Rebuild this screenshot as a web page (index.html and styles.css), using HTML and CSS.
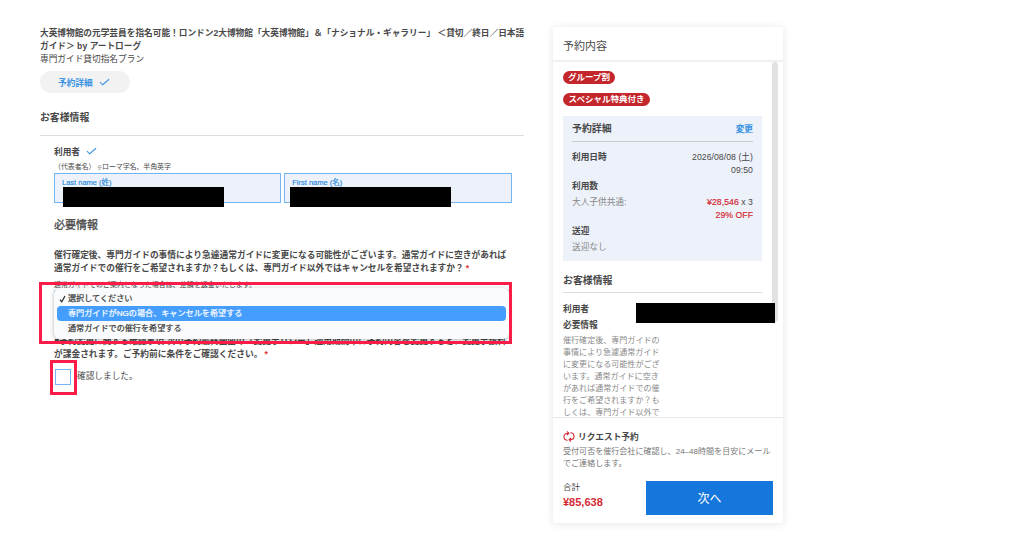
FILE: index.html
```html
<!DOCTYPE html>
<html>
<head>
<meta charset="utf-8">
<title>予約 - お客様情報</title>
<link rel="stylesheet" href="styles.css">
</head>
<body>
<div class="page">
  <main class="main">
    <h1 class="title">大英博物館の元学芸員を指名可能！ロンドン2大博物館「大英博物館」＆「ナショナル・ギャラリー」 ＜貸切／終日／日本語<br>ガイド＞ by アートローグ</h1>
    <p class="plan">専門ガイド貸切指名プラン</p>
    <div class="pill">予約詳細
      <svg class="check" viewBox="0 0 12 8"><path d="M1 4.2 4 7 11 1"/></svg>
    </div>
    <h2 class="section-title">お客様情報</h2>
    <form class="form">
      <div class="field-title">利用者
        <svg class="check" viewBox="0 0 12 8"><path d="M1 4.2 4 7 11 1"/></svg>
      </div>
      <p class="hint">（代表者名） <span class="kome">※</span>ローマ字名、半角英字</p>
      <div class="names">
        <div class="input"><label>Last name (姓)</label><span class="redacted"></span></div>
        <div class="input input-first"><label>First name (名)</label><span class="redacted"></span></div>
      </div>
      <h3 class="sub-title">必要情報</h3>
      <p class="question">催行確定後、専門ガイドの事情により急遽通常ガイドに変更になる可能性がございます。通常ガイドに空きがあれば<br>通常ガイドでの催行をご希望されますか？もしくは、専門ガイド以外ではキャンセルを希望されますか？<b class="req">*</b></p>
      <p class="note">通常ガイドでのご案内となった場合は、差額を返金いたします。</p>
      <div class="select">
        <div class="menu">
          <div class="option"><svg class="tick" viewBox="0 0 7 8"><path d="M1 4.6 2.7 6.8 6 1"/></svg>選択してください</div>
          <div class="option selected">専門ガイドがNGの場合、キャンセルを希望する</div>
          <div class="option">通常ガイドでの催行を希望する</div>
        </div>
        <div class="mark mark-menu"></div>
      </div>
      <p class="question policy">■予約変更に関する確認事項 次の予約最終画面の「変更ポリシー」適用期間中に予約内容を変更すると、変更手数料<br>が課金されます。ご予約前に条件をご確認ください。<b class="req">*</b></p>
      <div class="confirm"><span class="box"><span class="mark mark-box"></span></span><span>確認しました。</span></div>
    </form>
  </main>
  <aside class="card">
    <header class="card-head">予約内容</header>
    <div class="card-body">
      <div class="tag">グループ割</div>
      <div class="tag tag-wide">スペシャル特典付き</div>
      <section class="detail">
        <div class="detail-head"><span>予約詳細</span><a>変更</a></div>
        <div class="row"><b>利用日時</b><span class="value">2026/08/08 (土)<br>09:50</span></div>
        <div class="row"><b>利用数</b></div>
        <div class="row row-count"><span class="muted">大人子供共通:</span><span class="value"><em>¥28,546</em> x 3<br><em>29% OFF</em></span></div>
        <div class="row"><b>送迎</b></div>
        <div class="row row-last"><span class="muted">送迎なし</span></div>
      </section>
      <h3 class="card-title">お客様情報</h3>
      <div class="guest"><b>利用者</b><span class="redacted redacted-guest"></span></div>
      <div class="guest"><b>必要情報</b></div>
      <p class="summary">催行確定後、専門ガイドの<br>事情により急遽通常ガイド<br>に変更になる可能性がござ<br>います。通常ガイドに空き<br>があれば通常ガイドでの催<br>行をご希望されますか？も<br>しくは、専門ガイド以外で</p>
      <span class="scrollbar"></span>
    </div>
    <footer class="card-foot">
      <div class="request"><svg class="cycle" viewBox="0 0 12 11"><path d="M4.6 9.2H4A3.6 3.6 0 0 1 1 5.5C1 3.4 2.5 2.2 5.6 2.2M4 .5 5.8 2.2 4 4M7.4 1.8H8A3.6 3.6 0 0 1 11 5.5C11 7.6 9.5 8.8 6.4 8.8M8 7 6.2 8.8 8 10.5"/></svg>リクエスト予約</div>
      <p class="request-text">受付可否を催行会社に確認し、24–48時間を目安にメール<br>でご連絡します。</p>
      <div class="checkout">
        <div><div class="total-label">合計</div><div class="total">¥85,638</div></div>
        <button class="next">次へ</button>
      </div>
    </footer>
  </aside>
</div>
</body>
</html>
```
FILE: styles.css
```css
* { box-sizing: border-box; margin: 0; padding: 0; }
body {
  width: 1024px;
  height: 538px;
  overflow: hidden;
  background: #fff;
  color: #484848;
  font-family: "Liberation Sans", "Noto Sans CJK JP", sans-serif;
  font-size: 8.68px;
  white-space: nowrap;
}
svg { fill: none; stroke: currentColor; }
.page { display: flex; align-items: flex-start; gap: 29px; padding: 26px 0 0 40px; }
.main { width: 484px; padding-top: 1px; }
.title { font-size: 8.68px; line-height: 13px; font-weight: 700; }
.plan { line-height: 13px; }
.pill {
  display: flex; align-items: center; gap: 6px;
  width: 90px; height: 22px; margin-top: 5px; padding-left: 18px; padding-bottom: 1px;
  border-radius: 11px; background: #f2f2f2; color: #3a94e4; font-weight: 700;
}
.check { width: 11px; height: 8px; color: #3a94e4; stroke-width: 1.1; }
.section-title {
  height: 32px; margin-top: 11px; padding-top: 6px;
  border-bottom: 1px solid #ddd; font-size: 9.85px; line-height: 16px;
}
.form { padding: 8px 12px 0 14px; }
.field-title { display: flex; align-items: center; gap: 6px; height: 14px; font-weight: 700; }
.field-title .check { margin-bottom: 1px; }
.hint { height: 14px; margin-top: 2px; font-size: 7px; line-height: 14px; letter-spacing: -.12px; }
.kome { font-size: 5px; }
.names { display: flex; gap: 3px; width: 457.5px; margin-top: -1px; }
.input {
  position: relative; flex: 1; height: 30px; padding: 3px 7px;
  border: 1px solid #76b5f2; background: #edf2fa; color: #2387df;
}
.input label { display: block; font-size: 7.5px; line-height: 11px; -webkit-text-stroke: .15px; }
.redacted { position: absolute; left: 8px; top: 13px; width: 161px; height: 20px; background: #000; }
.input-first .redacted { left: 5px; }
.sub-title { margin-top: 14px; font-size: 11px; line-height: 16px; font-weight: 400; -webkit-text-stroke: .3px; }
.question { margin-top: 16px; font-size: 8.72px; line-height: 13px; font-weight: 700; }
.req { color: #e0353a; padding-left: 2px; }
.note { margin-top: 4px; font-size: 7px; line-height: 11px; }
.select { position: relative; height: 30px; border: 1px solid #b7d8f6; }
.menu {
  position: absolute; z-index: 1; left: -1px; top: -3px; width: 455px; height: 51px;
  padding: 3px; border-radius: 6px; background: #f9fbfc; color: #333;
  box-shadow: 0 1px 4px rgba(0, 0, 0, .3);
}
.option {
  position: relative; height: 15px; padding-left: 11px; line-height: 15px;
  border-radius: 4px; font-size: 8.12px; -webkit-text-stroke: .2px;
}
.option.selected { background: #459efe; color: #fff; }
.tick { position: absolute; left: 2px; top: 4px; width: 7px; height: 8px; stroke-width: 1.3; }
.mark { position: absolute; z-index: 2; border: 3px solid #fc1c48; }
.mark-menu { left: -16px; top: -9px; width: 473px; height: 62px; }
.policy { position: relative; margin-top: 15px; }
.confirm { display: flex; align-items: center; gap: 6px; height: 16px; margin-top: 8px; line-height: 14px; }
.box { position: relative; width: 16px; height: 16px; margin-left: 1px; border: 1px solid #76b5f2; }
.confirm > span:last-child { padding-bottom: 2px; }
.mark-box { left: -6px; top: -10px; width: 27px; height: 35px; }

.card {
  display: flex; flex-direction: column; width: 230px; height: 496px;
  border-radius: 3px; background: #fff; box-shadow: 0 1px 8px rgba(0, 0, 0, .11); margin-top: 1px;
}
.card-head { height: 35px; padding-left: 10px; border-bottom: 2px solid #f0f0f0; font-size: 11px; line-height: 38px; }
.card-body { position: relative; height: 355px; padding: 9px 21px 0 10px; }
.tag {
  width: 52px; height: 13px; margin-bottom: 9px; border-radius: 7px;
  background: #c3262b; color: #fff; font-size: 8.5px; line-height: 12px; font-weight: 700; text-align: center;
}
.tag-wide { width: 87px; }
.detail { height: 145px; margin-top: 10px; padding: 4px 9px; background: #edf2fa; }
.detail-head {
  display: flex; justify-content: space-between; height: 22px; margin-bottom: 9px;
  border-bottom: 1px solid #ccc; font-size: 9.9px; line-height: 18px; font-weight: 700;
}
.detail-head a { color: #2387df; font-size: 8.65px; font-weight: 400; -webkit-text-stroke: .25px; }
.row { display: flex; justify-content: space-between; line-height: 13px; margin-bottom: 3px; }
.detail .row:nth-child(n+3) { position: relative; }
.value { text-align: right; letter-spacing: .05px; }
.value em { color: #d42a35; font-style: normal; -webkit-text-stroke: .2px; }
.muted { color: #888; }
.card-title {
  height: 25px; margin: 7px 0 10px; padding-top: 4px; border-bottom: 1px solid #ddd;
  font-size: 9.9px; line-height: 17px;
}
.guest { position: relative; height: 13px; margin-bottom: 3px; line-height: 13px; }
.redacted-guest { left: 73px; top: 0; width: 139px; height: 20px; z-index: 2; }
.summary { color: #8a8a8a; font-size: 8.05px; line-height: 12.05px; }
.scrollbar { position: absolute; right: 5px; top: 0; width: 6px; height: 260px; border-radius: 3px; background: #e2e2e2; }
.card-foot { flex: 1; padding: 10px 10px 0; border-top: 1px solid #e8e8e8; }
.request { display: flex; align-items: center; gap: 3px; height: 16px; font-weight: 700; }
.cycle { width: 12px; height: 11px; color: #d42a35; stroke-width: 1.1; }
.request-text { margin-top: 2px; font-size: 8.05px; line-height: 12px; color: #777; }
.checkout { display: flex; justify-content: space-between; margin-top: 11px; }
.total-label { font-size: 8.5px; line-height: 13px; }
.total { color: #d42a35; font-size: 11px; line-height: 16px; font-weight: 700; }
.next {
  width: 127px; height: 34px; border: 0; background: #1576dc; color: #fff;
  font: 12px/32px "Noto Sans CJK JP", sans-serif;
}
```
